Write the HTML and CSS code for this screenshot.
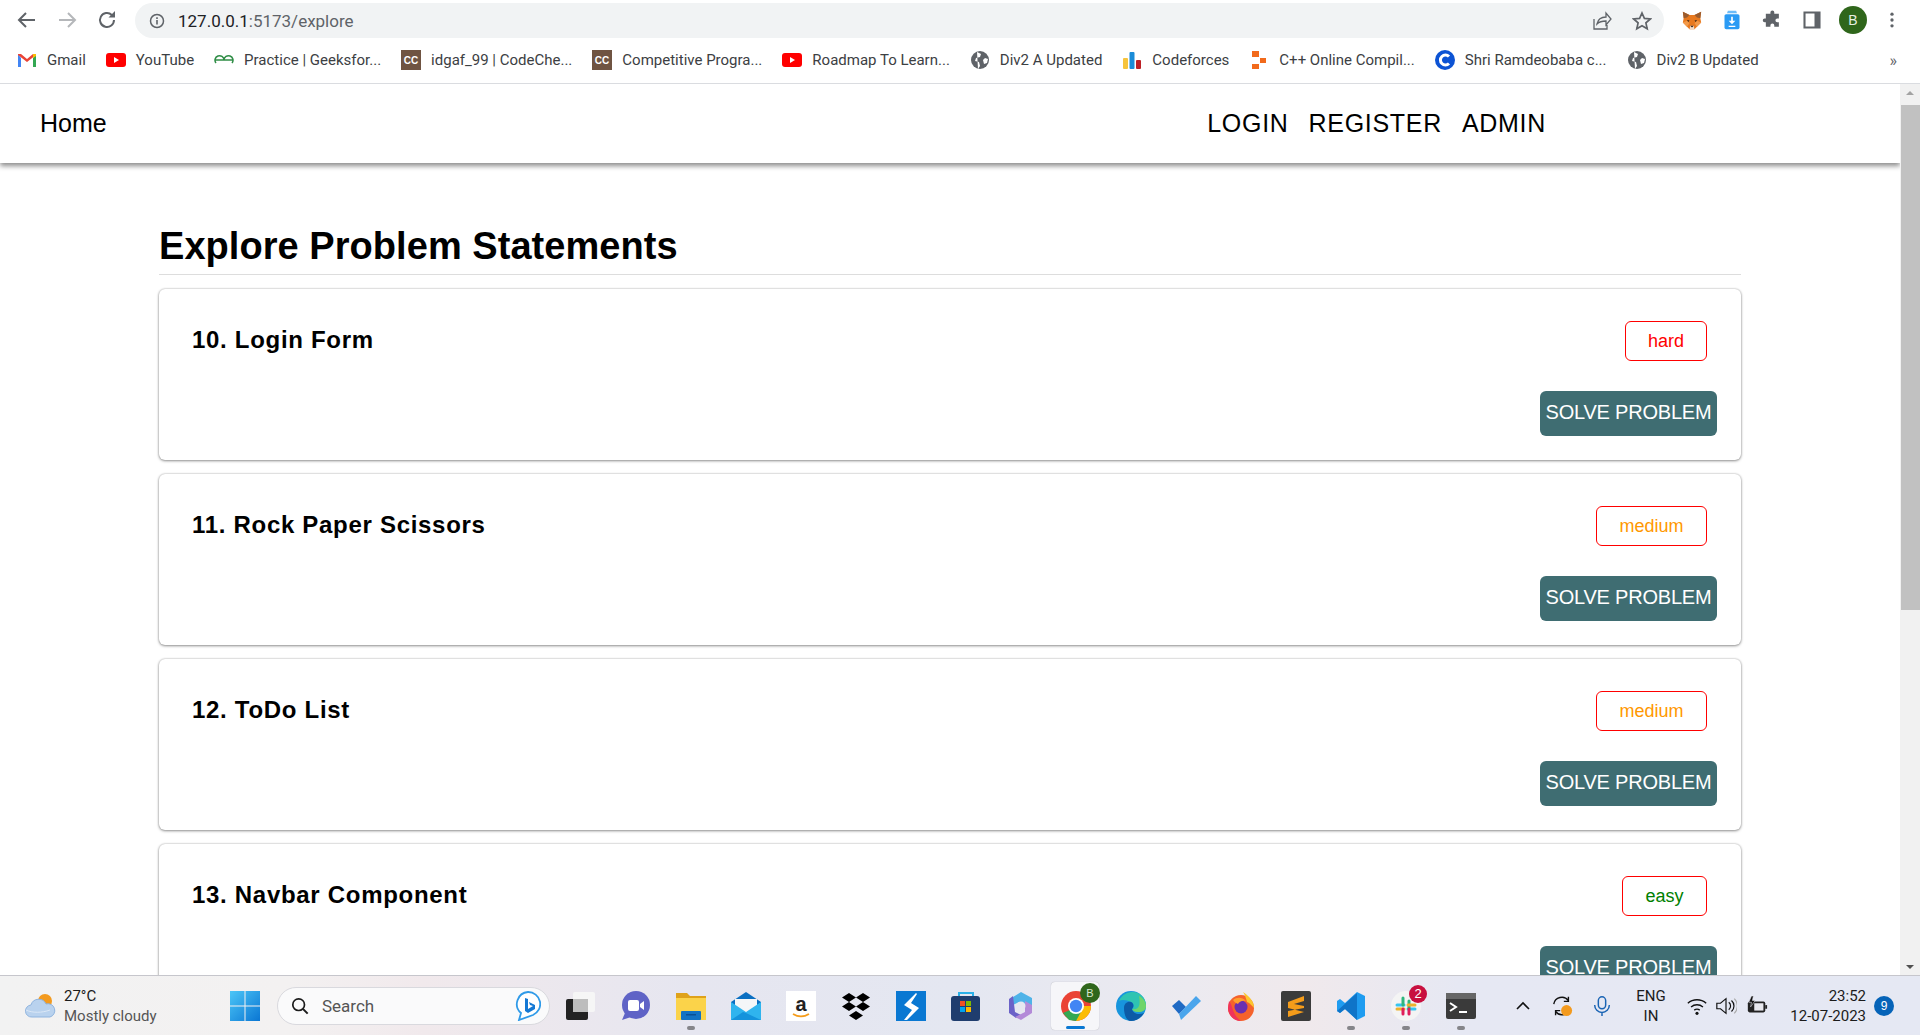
FILE: index.html
```html
<!DOCTYPE html>
<html lang="en">
<head>
    <meta charset="UTF-8">
    <meta name="viewport" content="width=device-width, initial-scale=1.0">
    <title>Explore Problem Statements</title>
    <link rel="stylesheet" href="styles.css">
</head>
<body>

    <!-- browser toolbar -->
    <div class="toolbar">
        <svg class="tool-btn" viewBox="0 0 24 24"><path d="M20 12H5M11 5l-7 7 7 7" fill="none" stroke="#5f6368" stroke-width="2"/></svg>
        <svg class="tool-btn" viewBox="0 0 24 24"><path d="M4 12h15M13 5l7 7-7 7" fill="none" stroke="#b5b7ba" stroke-width="2"/></svg>
        <svg class="tool-btn" viewBox="0 0 24 24"><path d="M19 12a7 7 0 1 1-2.200-5.100" fill="none" stroke="#5f6368" stroke-width="2"/><path d="M20 3v6.500h-6.500z" fill="#5f6368"/></svg>
        <div class="address">
            <svg class="info-icon" viewBox="0 0 16 16"><circle cx="8" cy="8" r="6.500" fill="none" stroke="#5f6368" stroke-width="1.500"/><path d="M7.200 7h1.600v4.500H7.200zM7.200 4.300h1.600v1.600H7.200z" fill="#5f6368"/></svg>
            <span class="url"><b>127.0.0.1</b>:5173/explore</span>
            <svg class="addr-icon share" viewBox="0 0 20 20"><path d="M2 8v10h13v-4M5 13c1-5 5-7 9-7V2l5 6-5 6v-4c-4 0-7 1-9 3z" fill="none" stroke="#5f6368" stroke-width="1.300"/></svg>
            <svg class="addr-icon" viewBox="0 0 20 20"><path d="M10 2l2.400 5.400 5.900.6-4.400 3.900 1.300 5.800L10 14.700l-5.200 3 1.300-5.800L1.700 8l5.900-.6z" fill="none" stroke="#5f6368" stroke-width="1.700"/></svg>
        </div>
        <svg class="ext-icon fox" viewBox="0 0 24 24"><path d="M1 2l8 4h6l8-4-1 8 1 5-5 5-3 3H9l-3-3-5-5 1-5z" fill="#e8791f"/><path d="M1 2l8 4-3 3-4 1zM23 2l-8 4 3 3 4 1z" fill="#9a5b2e"/><path d="M1 15l5-2 3 3-3 4zM23 15l-5-2-3 3 3 4z" fill="#f29a4a"/><path d="M9 23l1-4h4l1 4z" fill="#f3dcc8"/><path d="M10 19h4l-2 2z" fill="#2c2016"/><path d="M6 12l3 .5-1.500 2zM18 12l-3 .5 1.500 2z" fill="#33241a"/></svg>
        <svg class="ext-icon" viewBox="0 0 24 24"><path d="M7 1h10l1 3H6z" fill="#6dbcf8"/><path d="M5 5h14a2 2 0 0 1 2 2v14a2 2 0 0 1-2 2H5a2 2 0 0 1-2-2V7a2 2 0 0 1 2-2z" fill="#2b9bf4"/><path d="M11 8h2v5h3l-4 4-4-4h3zM8 19h8v1.500H8z" fill="#fff"/></svg>
        <svg class="ext-icon" viewBox="0 0 24 24"><path d="M10 3a2.500 2.500 0 0 1 5 0v2h6v6h-2a2.500 2.500 0 0 0 0 5h2v6h-6v-2a2.500 2.500 0 0 0-5 0v2H4v-6H2.500a2.500 2.500 0 0 1 0-5H4V5h6z" transform="scale(.92) translate(1 0)" fill="#5f6368"/></svg>
        <svg class="ext-icon" viewBox="0 0 24 24"><path d="M3 3h18v18H3z" fill="none" stroke="#5f6368" stroke-width="2.500"/><path d="M15 3h6v18h-6z" fill="#5f6368"/></svg>
        <span class="avatar">B</span>
        <svg class="ext-icon dots" viewBox="0 0 24 24"><circle cx="12" cy="5" r="2" fill="#5f6368"/><circle cx="12" cy="12" r="2" fill="#5f6368"/><circle cx="12" cy="19" r="2" fill="#5f6368"/></svg>
    </div>

    <!-- bookmarks -->
    <div class="bookmarks">
        <a class="mark">
            <svg viewBox="0 0 20 20"><path d="M1 4v13h3V8z" fill="#4285f4"/><path d="M19 4v13h-3V8z" fill="#34a853"/><path d="M1 4l3 0 6 5 6-5h3v1l-9 7-9-7z" fill="#ea4335"/><path d="M16 4h3v2l-3 2z" fill="#fbbc04"/></svg>
            Gmail
        </a>
        <a class="mark">
            <svg viewBox="0 0 20 20"><rect y="3" width="20" height="14" rx="3" fill="#f00"/><path d="M8 7l5 3-5 3z" fill="#fff"/></svg>
            YouTube
        </a>
        <a class="mark">
            <svg viewBox="0 0 20 20"><path d="M1 10h9a4.500 4.500 0 1 0-8 3M19 10h-9a4.500 4.500 0 1 1 8 3" fill="none" stroke="#2f8d46" stroke-width="1.500"/></svg>
            Practice | Geeksfor...
        </a>
        <a class="mark">
            <svg viewBox="0 0 20 20"><rect width="20" height="20" y="0" fill="#6f5442"/><text x="10" y="14" class="cc-text">CC</text></svg>
            idgaf_99 | CodeChe...
        </a>
        <a class="mark">
            <svg viewBox="0 0 20 20"><rect width="20" height="20" y="0" fill="#6f5442"/><text x="10" y="14" class="cc-text">CC</text></svg>
            Competitive Progra...
        </a>
        <a class="mark">
            <svg viewBox="0 0 20 20"><rect y="3" width="20" height="14" rx="3" fill="#f00"/><path d="M8 7l5 3-5 3z" fill="#fff"/></svg>
            Roadmap To Learn...
        </a>
        <a class="mark">
            <svg viewBox="0 0 20 20"><circle cx="10" cy="10" r="9" fill="#5f6368"/><path d="M7 2l4 2-1 3-4 1-1 3 4 1 1 4-2 3M15 8l-2 2 1 4 3-1 1-4z" fill="#fff"/></svg>
            Div2 A Updated
        </a>
        <a class="mark">
            <svg viewBox="0 0 20 20"><rect x="1" y="8" width="5" height="11" rx="1" fill="#f6c43d"/><rect x="7.500" y="2" width="5" height="17" rx="1" fill="#1a8cd8"/><rect x="14" y="10" width="5" height="9" rx="1" fill="#bd2026"/></svg>
            Codeforces
        </a>
        <a class="mark">
            <svg viewBox="0 0 20 20"><path d="M3 1h7v6H3zM11 8h6v5h-6zM3 14h7v5H3z" fill="#f26a1b"/></svg>
            C++ Online Compil...
        </a>
        <a class="mark">
            <svg viewBox="0 0 20 20"><circle cx="10" cy="10" r="10" fill="#0c53d4"/><path d="M14 6.500a5 5 0 1 0 0 7" fill="none" stroke="#fff" stroke-width="3"/></svg>
            Shri Ramdeobaba c...
        </a>
        <a class="mark">
            <svg viewBox="0 0 20 20"><circle cx="10" cy="10" r="9" fill="#5f6368"/><path d="M7 2l4 2-1 3-4 1-1 3 4 1 1 4-2 3M15 8l-2 2 1 4 3-1 1-4z" fill="#fff"/></svg>
            Div2 B Updated
        </a>
        <span class="more">»</span>
    </div>

    <div class="window">
        <div class="page">
            <nav class="navbar">
                <a class="home">Home</a>
                <div class="nav-links">
                    <a>LOGIN</a>
                    <a>REGISTER</a>
                    <a>ADMIN</a>
                </div>
            </nav>

            <main class="content">
                <h1>Explore Problem Statements</h1>

                <div class="card">
                    <div class="card-top">
                        <h2>10. Login Form</h2>
                        <span class="level hard">hard</span>
                    </div>
                    <div class="card-bottom"><button>SOLVE PROBLEM</button></div>
                </div>

                <div class="card">
                    <div class="card-top">
                        <h2>11. Rock Paper Scissors</h2>
                        <span class="level medium">medium</span>
                    </div>
                    <div class="card-bottom"><button>SOLVE PROBLEM</button></div>
                </div>

                <div class="card">
                    <div class="card-top">
                        <h2>12. ToDo List</h2>
                        <span class="level medium">medium</span>
                    </div>
                    <div class="card-bottom"><button>SOLVE PROBLEM</button></div>
                </div>

                <div class="card">
                    <div class="card-top">
                        <h2>13. Navbar Component</h2>
                        <span class="level easy">easy</span>
                    </div>
                    <div class="card-bottom"><button>SOLVE PROBLEM</button></div>
                </div>
            </main>
        </div>

        <div class="scrollbar">
            <span class="arrow up"></span>
            <span class="thumb"></span>
            <span class="track"></span>
            <span class="arrow down"></span>
        </div>
    </div>

    <!-- windows taskbar -->
    <footer class="taskbar">
        <div class="weather">
            <svg class="weather-icon" viewBox="0 0 32 26"><circle cx="21" cy="8" r="7" fill="#f39a1e"/><path d="M8 24a6 6 0 0 1-1-12 8 8 0 0 1 15-1 6.500 6.500 0 0 1 4 13z" fill="#b9d2ee" stroke="#8fb4df"/><path d="M2 17c6 3 16 3 24 0" fill="none" stroke="#dbe8f7"/></svg>
            <div class="weather-text">
                <span class="temp">27°C</span>
                <span>Mostly cloudy</span>
            </div>
        </div>

        <svg class="win-logo" viewBox="0 0 30 30">
            <defs>
                <linearGradient id="winA" x1="0" y1="0" x2="1" y2="1"><stop offset="0" stop-color="#4cc6f7"/><stop offset="1" stop-color="#0a76d3"/></linearGradient>
            </defs>
            <path d="M0 0h14.500v14.500H0zM15.500 0H30v14.500H15.500zM0 15.500h14.500V30H0zM15.500 15.500H30V30H15.500z" fill="url(#winA)"/>
        </svg>

        <div class="search">
            <svg class="search-icon" viewBox="0 0 20 20"><circle cx="8.500" cy="8.500" r="6.500" fill="none" stroke="#1b1b1b" stroke-width="1.900"/><path d="M13.500 13.500l5 5" stroke="#1b1b1b" stroke-width="2.200"/></svg>
            <span class="search-text">Search</span>
            <svg class="bing" viewBox="0 0 26 30"><path d="M13 1a12 12 0 0 1 5 23l-14 5 2-7A12 12 0 0 1 13 1z" fill="#fff" stroke="#2f9ae8" stroke-width="1.800"/><path d="M10 7l3 1v10l5-3-3-1-1-3 6 3v4l-7 4-3-2z" fill="#1478d4"/></svg>
        </div>

        <div class="apps">
            <span class="app">
                <svg viewBox="0 0 30 30"><rect x="7" y="1" width="22" height="20" rx="2" fill="#f6f6f6"/><rect y="8" width="22" height="21" rx="2" fill="#222"/><rect x="7" y="8" width="15" height="13" fill="#bdbdbd"/></svg>
            </span>
            <span class="app">
                <svg viewBox="0 0 30 30"><circle cx="15" cy="14" r="14" fill="#5f63c6"/><path d="M4 22l-3 7 9-3z" fill="#5f63c6"/><rect x="7" y="9" width="11" height="11" rx="2" fill="#fff"/><path d="M19 13l4-3v9l-4-3z" fill="#fff"/></svg>
            </span>
            <span class="app dot">
                <svg viewBox="0 0 30 30"><path d="M0 2h11l3 3h16v6H0z" fill="#dfa21a"/><path d="M0 7h30v22H0z" fill="#fbd34a"/><rect x="5" y="20" width="20" height="9" rx="1" fill="#1272c4"/><rect x="10" y="23" width="10" height="1.500" fill="#0b4f94"/></svg>
            </span>
            <span class="app">
                <svg viewBox="0 0 30 30"><path d="M0 11L15 1l15 10v18H0z" fill="#0a6fc2"/><path d="M4 8h22v7l-11 7-11-7z" fill="#f4f6f8"/><path d="M0 11l15 10 15-10v18H0z" fill="#2fb4ee"/><path d="M0 29l12-8 3 1 15 7z" fill="#1493dc"/></svg>
            </span>
            <span class="app">
                <svg viewBox="0 0 30 30"><rect width="30" height="30" y="0" fill="#fff"/><text x="15" y="20" class="amazon-text">a</text><path d="M7 23c5 3 11 3 16 0" fill="none" stroke="#f59c1a" stroke-width="1.800"/></svg>
            </span>
            <span class="app">
                <svg viewBox="0 0 30 30"><path d="M8 2l7 4.500-7 4.500-7-4.500zM22 2l7 4.500-7 4.500-7-4.500zM8 11l7 4.500-7 4.500-7-4.500zM22 11l7 4.500-7 4.500-7-4.500zM15 20l7 4.500-7 4.500-7-4.500z" fill="#000"/></svg>
            </span>
            <span class="app">
                <svg viewBox="0 0 30 30"><rect width="30" height="30" y="0" fill="#0a78d2"/><path d="M20 2L8 14l8 5-8 10 3 0 12-12-8-5 6-9z" fill="#fff"/></svg>
            </span>
            <span class="app">
                <svg viewBox="0 0 30 30"><path d="M8 7V2h14v5" fill="none" stroke="#2ab0e8" stroke-width="2"/><rect y="5" width="29" height="25" rx="3" fill="#1f3d6e"/><path d="M9 10h5v5H9z" fill="#f25022"/><path d="M15 10h5v5h-5z" fill="#7fba00"/><path d="M9 16h5v5H9z" fill="#00a4ef"/><path d="M15 16h5v5h-5z" fill="#ffb900"/></svg>
            </span>
            <span class="app">
                <svg viewBox="0 0 30 30"><path d="M15 1l11 6v9l-7-3-6-2-6 3V6z" fill="#4fb3e8"/><path d="M7 5l-4 3v14l7 5 5-3-6-3z" fill="#6b62c8"/><path d="M19 10l7 4v8l-11 7-6-3 10-5z" fill="#b38ad8"/><circle cx="15" cy="15" r="4.500" fill="#e6e7f0"/></svg>
            </span>
            <span class="app active">
                <svg viewBox="0 0 30 30"><circle cx="15" cy="15" r="15" fill="#ea4335"/><path d="M15 15h15a15 15 0 0 1-15 15z" fill="#fbbc04"/><path d="M2 22l6 7 7 1 6-11H9z" fill="#34a853"/><circle cx="15" cy="15" r="8" fill="#fff"/><circle cx="15" cy="15" r="6.200" fill="#4285f4"/></svg>
                <span class="chrome-badge">B</span>
            </span>
            <span class="app">
                <svg viewBox="0 0 30 30"><circle cx="15" cy="15" r="15" fill="#1895dd"/><path d="M3 10C6 3 12 1 17 1c7 0 13 6 13 13 0 4-3 7-8 7-4 0-6-2-6-3 2-1 3-5-1-7C11 9 6 8 3 10z" fill="#2fc4b2"/><path d="M23 5c4 2 7 6 7 10 0 4-3 6-8 6-3 0-5-1-6-3 6 1 9-2 7-13z" fill="#6fd56a"/><path d="M8 17c0-5 4-7 7-6 3 1 3 5 1 7 1 5 7 6 12 4-3 5-8 8-13 8C10 30 8 23 8 17z" fill="#0c5ba6"/></svg>
            </span>
            <span class="app">
                <svg viewBox="0 0 30 30"><path d="M1 15l7-6 7 7-7 7z" fill="#1f6ac4"/><path d="M8 23l17-18 5 5-20 19z" fill="#4aa5ec"/></svg>
            </span>
            <span class="app">
                <svg viewBox="0 0 30 30"><circle cx="15" cy="17" r="13" fill="#f5622c"/><path d="M17 1c6 4 11 9 11 16-2-2-4-5-7-6-1-4-2-7-4-10z" fill="#fcc62e"/><path d="M3 10c4 4 3 14 12 20-7 0-13-6-13-13z" fill="#f0335c"/><circle cx="15" cy="16" r="6.500" fill="#6b2fb0"/><path d="M7 9c4-3 9-3 13 1-4-1-7 1-8 3-2-1-4-2-5-4z" fill="#ff9f2e"/></svg>
            </span>
            <span class="app">
                <svg viewBox="0 0 30 30"><rect width="30" height="30" rx="2" y="0" fill="#3b3b3b"/><path d="M23 5L7 11v6l16 4v-6l-10-2 10-3zM7 20l16-3v4L7 26z" fill="#f59c1a"/></svg>
            </span>
            <span class="app dot">
                <svg viewBox="0 0 30 30"><path d="M21 1l8 4v20l-8 4-12-11-5 4-3-2V10l3-2 5 4z" fill="#1f9cf0"/><path d="M21 1v28L9 18l-5 4-3-2 20-18z" fill="#0f74c8"/></svg>
            </span>
            <span class="app dot">
                <svg viewBox="0 0 30 30"><circle cx="15" cy="15" r="15" fill="#f4f4f4"/><path d="M6 14h7M17 18h7" stroke="#36c5f0" stroke-width="3" stroke-linecap="round"/><path d="M12 7v7M18 10v7" stroke="#2eb67d" stroke-width="3" stroke-linecap="round"/><path d="M17 14h7M6 18h7" stroke="#ecb22e" stroke-width="3" stroke-linecap="round"/><path d="M12 18v5M18 18v5" stroke="#e01e5a" stroke-width="3" stroke-linecap="round"/></svg>
                <span class="slack-badge">2</span>
            </span>
            <span class="app dot">
                <svg viewBox="0 0 30 30"><rect y="2" width="30" height="26" rx="2" fill="#3a3a3a"/><rect y="2" width="30" height="6" fill="#666"/><path d="M4 12l6 4-6 4" fill="none" stroke="#fff" stroke-width="2"/><path d="M13 21h8" stroke="#fff" stroke-width="2"/></svg>
            </span>
        </div>

        <div class="tray">
            <svg class="tray-icon chevron" viewBox="0 0 16 16"><path d="M2 11l6-6 6 6" fill="none" stroke="#111" stroke-width="1.600"/></svg>
            <svg class="tray-icon sync" viewBox="0 0 24 24"><path d="M3 10a9 9 0 0 1 16-4M21 14a9 9 0 0 1-16 4" fill="none" stroke="#111" stroke-width="1.500"/><path d="M19 2v5h-5M5 22v-5h5" fill="none" stroke="#111" stroke-width="1.500"/><circle cx="17" cy="17" r="6" fill="#f39a1e"/></svg>
            <svg class="tray-icon mic" viewBox="0 0 24 24"><rect x="8" y="2" width="8" height="13" rx="4" fill="none" stroke="#1a64b4" stroke-width="1.600"/><path d="M4 11a8 8 0 0 0 16 0M12 19v4" fill="none" stroke="#1a64b4" stroke-width="1.600"/></svg>
            <div class="lang"><span>ENG</span><span>IN</span></div>
            <svg class="tray-icon wifi" viewBox="0 0 24 24"><path d="M2 9a15 15 0 0 1 20 0M5.500 13a10 10 0 0 1 13 0M9 16.500a5 5 0 0 1 6 0" fill="none" stroke="#111" stroke-width="1.500"/><circle cx="12" cy="20" r="1.700" fill="#111"/></svg>
            <svg class="tray-icon volume" viewBox="0 0 24 24"><path d="M2 9h4l6-5v16l-6-5H2z" fill="none" stroke="#111" stroke-width="1.300"/><path d="M15 8a5 5 0 0 1 0 8M18 6a8 8 0 0 1 0 12" fill="none" stroke="#111" stroke-width="1.300"/><path d="M21 4a11 11 0 0 1 0 16" fill="none" stroke="#aaa" stroke-width="1.300"/></svg>
            <svg class="tray-icon battery" viewBox="0 0 24 24"><rect x="2" y="7" width="19" height="12" rx="2" fill="#222"/><rect x="21" y="11" width="2" height="4" fill="#222"/><rect x="9" y="9" width="10" height="8" fill="#e8e8ee"/><path d="M6 1L3 8h3l-1 5 5-7H7l1-5z" fill="#111" stroke="#e8e8ee" stroke-width=".6"/></svg>
            <div class="clock"><span>23:52</span><span>12-07-2023</span></div>
            <span class="notify">9</span>
        </div>
    </footer>

</body>
</html>
```

FILE: styles.css
```css
* {
    box-sizing: border-box;
}

body {
    margin: 0;
    height: 1035px;
    overflow: hidden;
    display: flex;
    flex-direction: column;
    font-family: "Liberation Sans", Arial, sans-serif;
    background: white;
    color: black;
}

/* browser chrome */
.toolbar {
    height: 40px;
    flex: none;
    display: flex;
    align-items: center;
    padding-left: 15px;
}
.tool-btn {
    width: 24px;
    height: 24px;
    margin-right: 16px;
}
.address {
    width: 1529px;
    height: 35px;
    margin-top: 1px;
    background: #f1f3f4;
    border-radius: 18px;
    display: flex;
    align-items: center;
    padding-left: 14px;
}
.info-icon {
    width: 16px;
    height: 16px;
    margin-right: 13px;
}
.url {
    font-family: Roboto, sans-serif;
    font-size: 17px;
    color: #5f6368;
    flex: 1;
}
.url b {
    font-weight: normal;
    color: #202124;
}
.addr-icon {
    width: 20px;
    height: 20px;
    margin-right: 12px;
}
.addr-icon.share {
    margin-right: 20px;
}
.ext-icon {
    width: 20px;
    height: 20px;
    margin-left: 20px;
}
.fox {
    margin-left: 18px;
}
.avatar {
    width: 28px;
    height: 28px;
    border-radius: 50%;
    margin-left: 17px;
    background: #2f661b;
    color: #e6efe2;
    font-size: 14px;
    display: flex;
    align-items: center;
    justify-content: center;
}
.dots {
    margin-left: 15px;
}

.bookmarks {
    height: 44px;
    flex: none;
    display: flex;
    align-items: center;
    padding: 0 0 3px 17px;
    gap: 20px;
    border-bottom: 1px solid #dadce0;
    font-family: Roboto, sans-serif;
    font-size: 15px;
    color: #3c4043;
}
.mark {
    display: flex;
    align-items: center;
    gap: 10px;
    white-space: nowrap;
}
.mark svg {
    width: 20px;
    height: 20px;
    flex: none;
}
.cc-text {
    font-family: "Liberation Sans", sans-serif;
    font-size: 10px;
    font-weight: bold;
    fill: white;
    text-anchor: middle;
}
.more {
    margin-left: auto;
    margin-right: 23px;
    font-size: 16px;
    color: #5f6368;
}

/* page */
.window {
    flex: 1;
    min-height: 0;
    display: flex;
}
.page {
    flex: 1;
    min-width: 0;
    overflow: hidden;
}
.navbar {
    height: 79px;
    display: flex;
    align-items: center;
    justify-content: space-between;
    padding: 0 354px 0 40px;
    font-size: 25px;
    box-shadow: 0 3px 5px rgba(0, 0, 0, 0.45);
}
.nav-links {
    display: flex;
    gap: 20px;
    letter-spacing: 0.7px;
}
.content {
    padding: 60px 159px 0 159px;
}
h1 {
    margin: 0 0 14px 0;
    font-size: 38px;
    line-height: 46px;
    letter-spacing: 0.05px;
    padding-bottom: 5px;
    border-bottom: 1px solid #dddddd;
}
.card {
    height: 171px;
    margin-bottom: 14px;
    padding: 32px 24px 0 33px;
    background: white;
    border-radius: 6px;
    box-shadow: 0 1px 3px rgba(0, 0, 0, 0.4), 0 0 2px rgba(0, 0, 0, 0.25);
}
.card-top {
    display: flex;
    justify-content: space-between;
    align-items: flex-start;
}
h2 {
    margin: 0;
    font-size: 24px;
    line-height: 37px;
    letter-spacing: 0.7px;
}
.level {
    height: 40px;
    margin-right: 10px;
    padding: 0 22.5px;
    border: 1px solid red;
    border-radius: 6px;
    background: white;
    font-size: 18px;
    line-height: 38px;
}
.hard {
    padding: 0 22px;
    color: red;
}
.medium {
    color: #ff9800;
}
.easy {
    color: green;
}
.card-bottom {
    display: flex;
    justify-content: flex-end;
    margin-top: 30px;
}
button {
    height: 45px;
    width: 177px;
    padding: 0 0 2px 0;
    background: #3f6d72;
    color: white;
    border: none;
    border-radius: 6px;
    font-family: "Liberation Sans", Arial, sans-serif;
    font-size: 20px;
    letter-spacing: -0.2px;
}

.scrollbar {
    width: 20px;
    flex: none;
    display: flex;
    flex-direction: column;
    background: #f1f1f1;
}
.arrow {
    height: 17px;
    flex: none;
    display: flex;
    align-items: center;
    justify-content: center;
}
.arrow::after {
    content: "";
    border-left: 4px solid transparent;
    border-right: 4px solid transparent;
}
.up {
    margin-bottom: 4px;
}
.up::after {
    border-bottom: 4px solid #a3a3a3;
}
.down::after {
    border-top: 4px solid #505050;
}
.thumb {
    height: 505px;
    flex: none;
    margin-left: 1px;
    background: #c1c1c1;
}
.track {
    flex: 1;
}

/* taskbar */
.taskbar {
    height: 60px;
    flex: none;
    display: flex;
    align-items: center;
    border-top: 1px solid #c6c6cc;
    background: linear-gradient(90deg, #f2f2f2 0%, #f3f1f1 15%, #f1e9ec 22%, #e6e6f0 36%, #e4e7f1 50%, #eceaf0 62%, #f0e9ec 68%, #e6e8f3 76%, #e5e8f3 100%);
}
.weather {
    display: flex;
    align-items: center;
    padding-left: 24px;
    width: 230px;
    flex: none;
}
.weather-icon {
    width: 32px;
    height: 26px;
    margin-right: 8px;
}
.weather-text {
    display: flex;
    flex-direction: column;
    font-family: Roboto, sans-serif;
    font-size: 15px;
    line-height: 20px;
    color: #555;
}
.temp {
    color: #1b1b1b;
}
.win-logo {
    width: 30px;
    height: 30px;
    flex: none;
}
.search {
    width: 273px;
    height: 38px;
    flex: none;
    margin-left: 17px;
    padding: 0 8px 0 13px;
    display: flex;
    align-items: center;
    background: #fafafb;
    border: 1px solid #d9d9de;
    border-radius: 19px;
}
.search-icon {
    width: 18px;
    height: 18px;
    margin-right: 13px;
}
.search-text {
    flex: 1;
    font-family: Roboto, sans-serif;
    font-size: 17px;
    color: #555;
}
.bing {
    width: 26px;
    height: 30px;
}
.apps {
    display: flex;
    margin-left: 3px;
    flex: none;
}
.app {
    position: relative;
    width: 55px;
    height: 48px;
    display: flex;
    align-items: flex-start;
    justify-content: center;
    padding-top: 9px;
}
.app svg {
    position: relative;
    width: 30px;
    height: 30px;
}
.dot::after {
    content: "";
    position: absolute;
    left: 24px;
    bottom: 0;
    width: 8px;
    height: 4px;
    border-radius: 2px;
    background: #85858a;
}
.active::before {
    content: "";
    position: absolute;
    top: 0;
    bottom: 0;
    left: 3px;
    right: 4px;
    background: #f6f6f9;
    border-radius: 4px;
    box-shadow: 0 0 1px rgba(0, 0, 0, 0.3);
}
.active::after {
    content: "";
    position: absolute;
    left: 18px;
    bottom: 1px;
    width: 19px;
    height: 3px;
    border-radius: 2px;
    background: #0a78d2;
}
.chrome-badge {
    position: absolute;
    top: 1px;
    right: 3px;
    width: 20px;
    height: 20px;
    border-radius: 50%;
    background: #2f661b;
    color: #d8e6d0;
    font-size: 11px;
    line-height: 20px;
    text-align: center;
}
.slack-badge {
    position: absolute;
    top: 3px;
    right: 6px;
    width: 18px;
    height: 18px;
    border-radius: 50%;
    background: #c8103f;
    color: white;
    font-size: 13px;
    line-height: 18px;
    text-align: center;
}
.tray {
    flex: 1;
    display: flex;
    align-items: center;
    padding-left: 27px;
}
.tray-icon {
    width: 22px;
    height: 22px;
    flex: none;
}
.chevron {
    width: 16px;
    height: 16px;
}
.sync {
    margin-left: 20px;
}
.mic {
    margin-left: 18px;
}
.lang {
    width: 50px;
    margin-left: 13px;
    display: flex;
    flex-direction: column;
    align-items: center;
    font-family: Roboto, sans-serif;
    font-size: 15px;
    line-height: 20px;
    color: #1b1b1b;
}
.wifi {
    margin-left: 10px;
}
.volume {
    margin-left: 7px;
}
.battery {
    margin-left: 9px;
}
.clock {
    width: 98px;
    display: flex;
    flex-direction: column;
    align-items: flex-end;
    font-family: Roboto, sans-serif;
    font-size: 15px;
    line-height: 20px;
    color: #1b1b1b;
}
.notify {
    width: 20px;
    height: 20px;
    margin-left: 8px;
    border-radius: 50%;
    background: #0563b8;
    color: white;
    font-size: 12px;
    line-height: 20px;
    text-align: center;
}
.amazon-text {
    font-size: 20px;
    font-weight: bold;
    text-anchor: middle;
    fill: #222;
}
```
